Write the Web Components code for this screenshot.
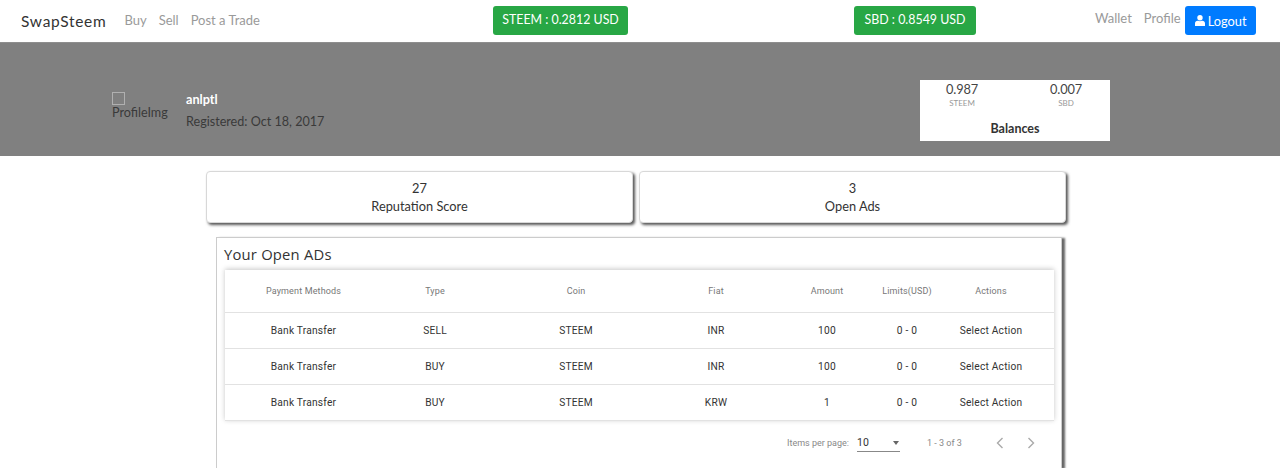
<!DOCTYPE html>
<html>
<head>
<meta charset="utf-8">
<title>SwapSteem</title>
<style>
	html { overflow: hidden; }
	body { margin: 0; background: #fff; font-family: "Lato", "Liberation Sans", sans-serif; color: #212529; }
	.stats { display: flex; gap: 6px; padding: 15px 0 0 206px; }
</style>
</head>
<body>
<swap-nav></swap-nav>
<profile-hero name="anlptl" registered="Registered: Oct 18, 2017"></profile-hero>
<div class="stats">
	<stat-card value="27">Reputation Score</stat-card>
	<stat-card value="3">Open Ads</stat-card>
</div>
<ads-panel></ads-panel>

<script>
class SwapNav extends HTMLElement {
	constructor() {
		super();
		const shadowRoot = this.attachShadow({mode: 'open'});
		shadowRoot.innerHTML = `
			<style>
				:host { display: flex; align-items: center; height: 42px; padding-left: 21px; background: #fff; font-size: 13px; box-sizing: border-box; }
				.left { display: flex; align-items: center; width: 472px; }
				.brand { font-size: 15.5px; letter-spacing: .7px; color: #333; margin-right: 18px; }
				.left a { position: relative; top: -1px; margin-right: 12px; }
				a { color: #9a9a9a; }
				.price { display: flex; width: 361px; }
				.price:nth-of-type(3) { width: 241px; }
				.btn { display: inline-block; box-sizing: border-box; height: 29px; line-height: 28px; margin-top: -1px; border-radius: 3px; color: #fff; background: #28a745; font-size: 12.4px; white-space: nowrap; }
				.green1 { width: 135px; text-align: center; }
				.green2 { width: 122px; text-align: center; }
				.right { display: flex; align-items: center; }
				.right a { position: relative; top: -3px; margin-right: 12px; }
				.right a:nth-child(2) { margin-right: 4.5px; }
				.logout { background: #007bff; width: 71px; display: flex; align-items: center; justify-content: center; gap: 3px; font-size: 12.8px; }
				svg { width: 10px; height: 11px; fill: #fff; }
			</style>
			<div class="left">
				<span class="brand">SwapSteem</span>
				<a>Buy</a><a>Sell</a><a>Post a Trade</a>
			</div>
			<div class="price"><span class="btn green1">STEEM : 0.2812 USD</span></div>
			<div class="price"><span class="btn green2">SBD : 0.8549 USD</span></div>
			<div class="right">
				<a>Wallet</a><a>Profile</a>
				<span class="btn logout"><svg viewBox="0 0 10 11"><circle cx="5" cy="2.8" r="2.7"/><path d="M0 11V8.4C0 6.9 1.2 5.8 2.6 5.8h.5c1.2.6 2.6.6 3.8 0h.5C8.8 5.8 10 6.9 10 8.4V11z"/></svg>Logout</span>
			</div>
		`;
	}
}

class ProfileHero extends HTMLElement {
	constructor() {
		super();
		const shadowRoot = this.attachShadow({mode: 'open'});
		shadowRoot.innerHTML = `
			<style>
				:host { display: flex; justify-content: space-between; box-sizing: border-box; height: 114px; padding: 37px 170px 0 112px; background: #808080; border-top: 1px solid #8e8e8e; font-size: 12.6px; color: #3a3a3a; }
				.who { display: flex; padding-top: 10px; }
				.img { width: 74px; line-height: 17px; }
				.box { display: block; width: 11px; height: 11px; border: 1px solid #b0b0b0; margin: 2px 0 -1px; }
				.name { color: #fff; font-weight: 700; font-size: 12.7px; line-height: 16px; margin-top: 1px; }
				.reg { margin-top: 6px; line-height: 17px; }
			</style>
			<div class="who">
				<div class="img"><span class="box"></span>ProfileImg</div>
				<div>
					<div class="name"></div>
					<div class="reg"></div>
				</div>
			</div>
			<balance-card></balance-card>
		`;
		shadowRoot.querySelector(".name").textContent = this.getAttribute("name");
		shadowRoot.querySelector(".reg").textContent = this.getAttribute("registered");
	}
}

class BalanceCard extends HTMLElement {
	constructor() {
		super();
		const shadowRoot = this.attachShadow({mode: 'open'});
		shadowRoot.innerHTML = `
			<style>
				:host { display: block; box-sizing: border-box; width: 190px; height: 61px; background: #fff; text-align: center; color: #333; }
				.cols { display: flex; gap: 18px; padding-top: 2px; }
				.cols div { width: 86px; font-size: 12.8px; line-height: 15px; color: #444; letter-spacing: -.15px; }
				.cols div + div { width: 90px; }
				small { display: block; margin-top: 1px; font-size: 8px; line-height: 11px; color: #999; letter-spacing: 0; }
				.title { margin-top: 12px; font-size: 12.5px; font-weight: 700; line-height: 16px; color: #333; }
			</style>
			<div class="cols">
				<div>0.987<small>STEEM</small></div>
				<div>0.007<small>SBD</small></div>
			</div>
			<div class="title">Balances</div>
		`;
	}
}

class StatCard extends HTMLElement {
	constructor() {
		super();
		const shadowRoot = this.attachShadow({mode: 'open'});
		shadowRoot.innerHTML = `
			<style>
				:host { display: block; box-sizing: border-box; width: 427px; height: 52px; padding-top: 7px; background: #fff; border: 1px solid #d8d8d8; border-radius: 4px; box-shadow: 2px 2px 3px #555; text-align: center; font-size: 12.8px; line-height: 18px; color: #333; }
			</style>
			<div class="value"></div>
			<slot></slot>
		`;
		shadowRoot.querySelector(".value").textContent = this.getAttribute("value");
	}
}

class AdsPanel extends HTMLElement {
	constructor() {
		super();
		const shadowRoot = this.attachShadow({mode: 'open'});
		shadowRoot.innerHTML = `
			<style>
				:host { display: block; box-sizing: border-box; width: 846px; height: 231px; margin: 14px 0 0 216px; padding: 7px 8px 0 8px; background: #fff; border: 1px solid #ccc; border-bottom: 0; box-shadow: 3px 1px 2px #666; }
				h2 { margin: 0 0 0 -1px; font: 400 14.8px/18px "Open Sans", "Liberation Sans", sans-serif; color: #333; letter-spacing: .2px; }
			</style>
			<h2>Your Open ADs</h2>
			<ads-table></ads-table>
		`;
	}
}

const AD_ROWS = [
	["Bank Transfer", "SELL", "STEEM", "INR", "100", "0 - 0", "Select Action"],
	["Bank Transfer", "BUY", "STEEM", "INR", "100", "0 - 0", "Select Action"],
	["Bank Transfer", "BUY", "STEEM", "KRW", "1", "0 - 0", "Select Action"]
];
const AD_HEAD = ["Payment Methods", "Type", "Coin", "Fiat", "Amount", "Limits(USD)", "Actions"];

class AdsTable extends HTMLElement {
	constructor() {
		super();
		const shadowRoot = this.attachShadow({mode: 'open'});
		const cells = list => list.map(text => `<span>${text}</span>`).join("");
		shadowRoot.innerHTML = `
			<style>
				:host { display: block; width: 829px; margin-top: 7px; font-family: Roboto, "Liberation Sans", sans-serif; background: #fff; }
				.table { box-shadow: 0 -1px 5px rgba(0,0,0,.22); clip-path: inset(-8px -8px -5px -8px); }
				.row { display: grid; grid-template-columns: 109px 154px 128px 152px 70px 90px 78px; padding: 0 24px; align-items: center; text-align: center; height: 35px; border-bottom: 1px solid #e2e2e2; font-size: 10.2px; color: #333; letter-spacing: .22px; white-space: nowrap; }
				.row span { justify-self: center; }
				.head { box-sizing: content-box; height: 41px; padding-bottom: 1px; font-size: 9px; color: #777; letter-spacing: .15px; }
				.pager { display: flex; align-items: center; height: 44px; padding-left: 562px; font-size: 9px; color: #888; }
				.size { display: flex; justify-content: space-between; align-items: center; width: 43px; height: 17px; margin: 0 27px 0 8px; border-bottom: 1px solid #888; font-size: 10.5px; color: #333; }
				.size i { width: 0; height: 0; margin-right: 1px; border: 3.5px solid transparent; border-top: 4px solid #666; border-bottom: 0; }
				.nav { display: flex; gap: 19px; margin-left: 32px; }
				svg { width: 12px; height: 14px; fill: none; stroke: #aaa; stroke-width: 1.4; }
			</style>
			<div class="table">
				<div class="row head">${cells(AD_HEAD)}</div>
				${AD_ROWS.map(row => `<div class="row">${cells(row)}</div>`).join("")}
			</div>
			<div class="pager">
				<span>Items per page:</span>
				<div class="size"><span>10</span><i></i></div>
				<span>1 - 3 of 3</span>
				<div class="nav">
					<svg viewBox="0 0 12 14"><path d="M8.5 2 3.5 7l5 5"/></svg>
					<svg viewBox="0 0 12 14"><path d="M3.5 2l5 5-5 5"/></svg>
				</div>
			</div>
		`;
	}
}

window.customElements.define('balance-card', BalanceCard);
window.customElements.define('swap-nav', SwapNav);
window.customElements.define('profile-hero', ProfileHero);
window.customElements.define('stat-card', StatCard);
window.customElements.define('ads-table', AdsTable);
window.customElements.define('ads-panel', AdsPanel);
</script>
</body>
</html>
